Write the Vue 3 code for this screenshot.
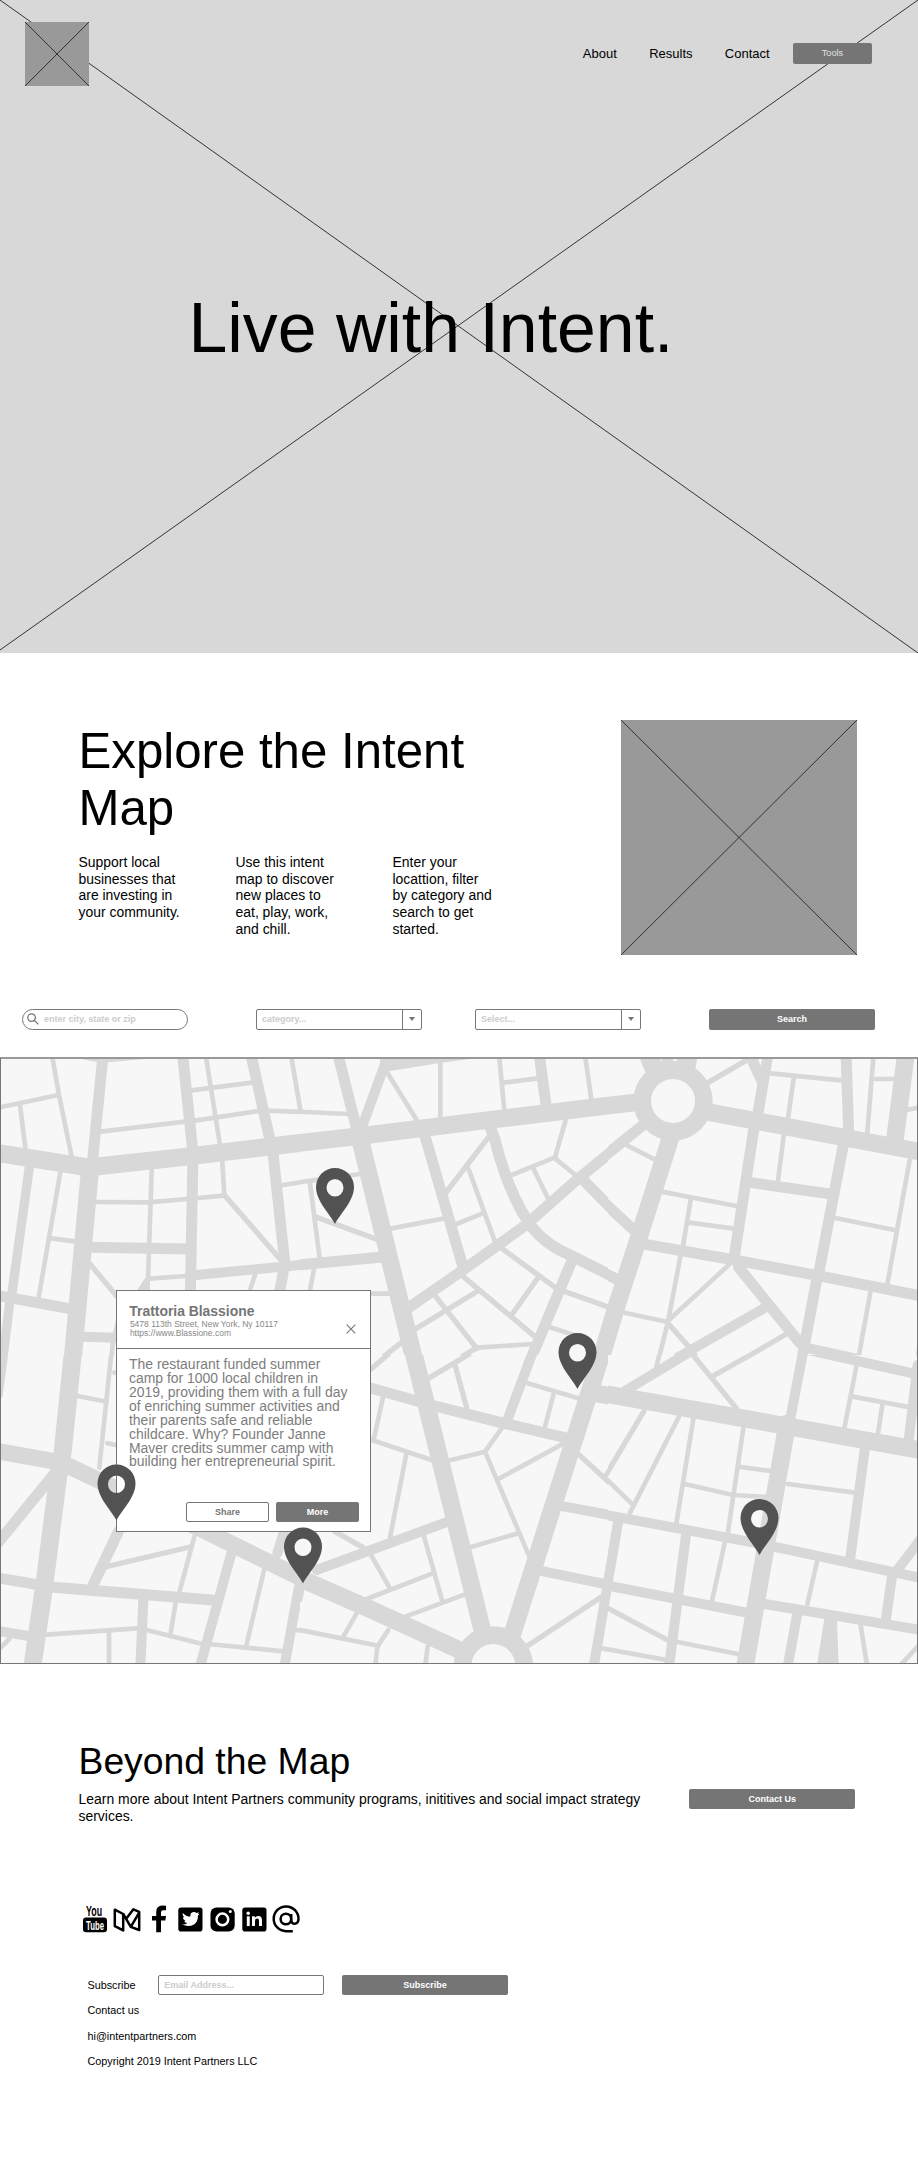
<script setup>
const nav = ['About', 'Results', 'Contact']

const steps = [
  ['Support local', 'businesses that', 'are investing in', 'your community.'],
  ['Use this intent', 'map to discover', 'new places to', 'eat, play, work,', 'and chill.'],
  ['Enter your', 'locattion, filter', 'by category and', 'search to get', 'started.'],
]

const story = [
  'The restaurant funded summer',
  'camp for 1000 local children in',
  '2019, providing them with a full day',
  'of enriching summer activities and',
  'their parents safe and reliable',
  'childcare. Why? Founder Janne',
  'Maver credits summer camp with',
  'building her entrepreneurial spirit.',
]

const pins = [
  { x: 335, y: 167 },
  { x: 577.5, y: 332 },
  { x: 116.5, y: 463.5 },
  { x: 303, y: 526.5 },
  { x: 759.5, y: 498 },
]

// Street map, split in sheets drawn at three units per pixel.
// roads: stroke width -> list of centre lines; areas: filled junctions.
const sheets = [
  {
    x: 0, y: -7, w: 300, h: 305,
    roads: {
      54: ['0,310 265,352 560,320 930,275', '270,358 218,930'],
      33: ['309,15 277,340', '548,15 579,310 571,730', '753,15 810,270', '819,310 855,645', '-5,737 205,775', '270,592 560,597', '850,665 838,730'],
      30: ['588,675 930,642', '250,860 345,863'],
      28: ['88,352 35,735', '30,750 8,930'],
      16: ['268,640 350,738', '675,437 838,625'],
      14: ['156,15 177,135 215,320', '0,172 172,136', '60,165 76,292', '302,245 555,215', '617,15 660,285', '575,121 755,98', '585,212 775,183', '873,15 901,180', '803,182 930,187', '848,405 930,393', '181,367 116,742', '155,565 222,574', '290,456 445,457 560,447 673,437', '455,362 444,690', '450,686 557,678', '667,335 673,437', '765,675 750,720', '935,660 920,725', '338,880 334,930', '345,852 354,815'],
    },
    areas: ['235,20 240,26 290,36 325,37 470,24 470,20', '436,683 450,690 450,722 410,722'],
  },
  {
    x: 300, y: -7, w: 308, h: 305,
    roads: {
      53: ['-5,279 180,258 560,211 940,165', '182,275 343,930', '975,685 949,770 902,930'],
      33: ['113,10 172,245', '717,10 738,165', '-5,645 240,622', '376,262 490,655', '330,770 485,663 675,527 830,390 940,300', '854,394 940,482', '814,636 691,930'],
      30: ['265,15 190,220'],
      16: ['50,502 230,568', '565,262 440,425', '605,595 765,712', '490,680 705,860', '715,682 635,795', '787,722 930,773', '405,737 530,895', '345,838 530,725', '530,893 460,935', '240,928 305,877'],
      14: ['-5,185 145,192', '-27,15 1,180', '262,68 350,210', '421,35 421,200', '597,15 613,180', '610,98 712,85', '855,15 874,148', '-5,397 180,372', '30,400 59,625', '42,658 30,720', '215,731 270,731', '275,535 433,505', '505,355 585,575', '470,522 548,490', '797,210 765,322 635,375', '700,355 745,447', '765,325 830,378', '745,830 830,857', '530,893 700,882'],
    },
    areas: ['240,20 525,20 525,25 415,40 270,63 240,60'],
    curve: 'M572,235 L585,270 Q622,420 685,517 Q730,582 810,615 L935,678',
  },
  {
    x: 608, y: -7, w: 310, h: 305,
    roads: {
      53: ['-10,168 90,157', '290,184 940,306', '894,10 860,275', '187,265 95,555 25,770 -24,935'],
      33: ['-5,314 102,228', '480,10 450,190', '437,240 378,625', '714,10 722,245', '430,398 660,431', '705,290 633,665 625,695 580,935', '112,583 380,630 630,677 940,738', '392,652 575,878', '-20,450 75,538', '-15,667 25,687'],
      30: ['468,775 210,922', '590,892 935,968'],
      16: ['300,98 420,28', '180,820 242,890 275,935', '535,852 385,940'],
      14: ['488,70 700,91', '557,85 540,205', '797,10 778,248', '802,87 860,87', '900,179 935,172', '527,258 510,392', '905,330 838,703', '682,504 860,540', '160,425 385,468', '248,450 225,588', '245,518 378,536', '218,615 180,815 150,935', '362,645 185,808', '50,788 175,815', '787,728 753,915', '55,285 140,328', '938,860 928,935'],
    },
    areas: ['95,25 90,15 270,15 261,60 112,66', '412,20 418,38 448,103 460,60 470,15'],
    blocks: ['154,20 160,20 163,39', '195,15 196,33 206,33 211,15', '446,18 464,18 458,47'],
    ring: { x: 195, y: 153 },
  },
  {
    x: 0, y: 298, w: 300, h: 309,
    roads: {
      54: ['219,-10 188,290 175,360 133,690 97,935'],
      50: ['-5,289 185,323 620,530 905,670'],
      33: ['160,360 -5,562', '355,530 280,688', '-5,669 160,697 636,735'],
      30: ['694,595 600,935', '897,695 853,935', '430,735 421,935', '-5,828 85,843', '852,530 832,595'],
      26: ['12,-5 -5,120'],
      16: ['310,637 570,576'],
      14: ['232,123 320,140', '334,-5 298,338', '322,265 352,271', '343,53 352,53', '583,545 538,712', '792,645 740,868', '625,867 850,889', '890,825 930,833', '140,839 410,820', '440,825 610,868', '527,743 512,833', '327,832 327,930', '0,880 28,852'],
    },
  },
  {
    x: 300, y: 298, w: 308, h: 309,
    roads: {
      53: ['341,-5 548,830', '-5,668 200,758 490,890', '636,840 907,-10', '885,115 940,124'],
      33: ['200,96 340,135 405,153 600,202 800,249'],
      30: ['698,-8 624,190', '50,645 438,502', '790,454 935,481', '730,649 905,685', '938,600 881,935'],
      16: ['213,42 265,-2', '385,70 510,-4', '465,30 500,158', '838,300 930,385', '105,530 190,578', '683,872 905,725'],
      14: ['683,85 835,130', '760,120 735,215', '250,122 222,250', '215,255 395,315', '320,292 270,548', '450,316 555,290 605,220', '555,290 688,605', '595,372 790,266', '513,576 650,536', '915,365 935,335', '213,600 267,695', '372,545 426,735', '200,732 398,655', '310,787 495,718', '-5,824 235,872', '170,775 130,845', '265,825 232,875 226,930', '383,875 376,930', '905,880 935,886', '8,695 0,735'],
    },
    ring: { x: 580, y: 933 },
  },
  {
    x: 608, y: 298, w: 310, h: 309,
    roads: {
      53: ['-35,112 400,189 940,286', '538,205 411,935'],
      30: ['240,-6 52,107', '585,-8 547,190', '600,-15 915,55', '929,30 902,255', '-5,480 450,565 940,669', '31,497 -2,690 -43,930', '-5,691 412,772', '470,747 940,825', '234,540 183,935', '770,285 727,608', '864,650 938,553', '852,665 834,790', '567,780 539,935'],
      16: ['255,0 385,160', '315,63 435,-5', '108,168 -5,358', '-5,757 178,855'],
      14: ['155,-5 145,36', '745,35 710,215', '735,125 895,155', '823,150 810,235', '-5,372 70,445', '213,185 65,475', '256,192 205,505', '406,220 360,530', '230,387 375,420 480,426', '398,336 490,348', '350,565 312,738', '-5,882 170,914', '205,860 390,897', '540,387 735,412', '627,620 598,748', '758,812 777,930', '875,933 935,868'],
    },
    areas: ['650,785 687,795 692,935 626,935'],
  },
]
</script>

<template>
  <main class="page">
    <section class="hero">
      <svg class="cross" viewBox="0 0 918 653" preserveAspectRatio="none">
        <path d="M0,0 L918,653 M918,0 L0,650" />
      </svg>
      <header class="bar">
        <svg class="logo" viewBox="0 0 64 64"><path d="M0,0 L64,64 M64,0 L0,64" /></svg>
        <nav class="links">
          <a v-for="n in nav" :key="n">{{ n }}</a>
        </nav>
        <button class="tools">Tools</button>
      </header>
      <h1>Live with Intent.</h1>
    </section>

    <section class="explore">
      <div class="intro">
        <h2>Explore the Intent<br />Map</h2>
        <div class="steps">
          <p v-for="(s, i) in steps" :key="i">
            <span v-for="l in s" :key="l" class="line">{{ l }}</span>
          </p>
        </div>
      </div>
      <svg class="picture" viewBox="0 0 236 235"><path d="M0,0 L236,235 M236,0 L0,235" /></svg>
    </section>

    <section class="filters">
      <div class="field round">
        <svg class="lens" viewBox="0 0 12 12"><circle cx="4.6" cy="4.6" r="3.8" /><path d="M7.4,7.4 L11.4,11.4" /></svg>
        <span>enter city, state or zip</span>
      </div>
      <div class="field select">
        <span>category...</span>
        <i><svg viewBox="0 0 6 4"><path d="M0,0 H6 L3,4 Z" /></svg></i>
      </div>
      <div class="field select">
        <span>Select...</span>
        <i><svg viewBox="0 0 6 4"><path d="M0,0 H6 L3,4 Z" /></svg></i>
      </div>
      <button class="btn">Search</button>
    </section>

    <section class="map">
      <svg class="streets" viewBox="0 0 918 607">
        <svg
          v-for="(s, i) in sheets" :key="i"
          :x="s.x" :y="s.y" :width="s.w" :height="s.h"
          :viewBox="`0 0 ${s.w * 3} ${s.h * 3}`"
        >
          <rect class="ground" :width="s.w * 3" :height="s.h * 3" />
          <g v-for="(lines, w) in s.roads" :key="w" class="road" :stroke-width="w">
            <polyline v-for="p in lines" :key="p" :points="p" />
          </g>
          <path v-if="s.curve" class="road" :d="s.curve" stroke-width="34" />
          <polygon v-for="a in s.areas || []" :key="a" class="area" :points="a" />
          <polygon v-for="b in s.blocks || []" :key="b" class="ground" :points="b" />
          <template v-if="s.ring">
            <circle class="area" :cx="s.ring.x" :cy="s.ring.y" r="119" />
            <circle class="ground" :cx="s.ring.x" :cy="s.ring.y" r="66" />
          </template>
        </svg>
      </svg>

      <article class="card">
        <header>
          <div>
            <h4>Trattoria Blassione</h4>
            <p>5478 113th Street, New York, Ny 10117</p>
            <p>https://www.Blassione.com</p>
          </div>
          <svg class="close" viewBox="0 0 10 10"><path d="M.7,.7 L9.3,9.3 M9.3,.7 L.7,9.3" /></svg>
        </header>
        <div class="story">
          <span v-for="l in story" :key="l" class="line">{{ l }}</span>
        </div>
        <footer>
          <button class="btn ghost">Share</button>
          <button class="btn">More</button>
        </footer>
      </article>

      <svg class="pins" viewBox="0 0 918 607">
        <path
          v-for="p in pins" :key="p.x" :transform="`translate(${p.x} ${p.y})`"
          d="M0,0 C-5,-10 -19,-23 -19,-37 A19,19 0 0 1 19,-37 C19,-23 5,-10 0,0 Z M8.5,-36.3 A8.5,8.8 0 1 0 -8.5,-36.3 A8.5,8.8 0 1 0 8.5,-36.3 Z"
        />
      </svg>
      <div class="frame"></div>
    </section>

    <section class="beyond">
      <div>
        <h3>Beyond the Map</h3>
        <p>Learn more about Intent Partners community programs, inititives and social impact strategy<br />services.</p>
      </div>
      <button class="btn">Contact Us</button>
    </section>

    <section class="social">
      <svg viewBox="0 0 220 28">
        <g class="brand">
          <text x="3.1" y="11" font-size="15" textLength="16" lengthAdjust="spacingAndGlyphs">You</text>
          <rect x="0" y="12.6" width="24" height="14.6" rx="3" />
          <text class="inv" x="3" y="24.9" font-size="13" textLength="18" lengthAdjust="spacingAndGlyphs">Tube</text>
        </g>
        <g class="outline">
          <path d="M31.8,4.7 L40.2,9 V25.4 L31.8,21.1 Z" />
          <path d="M40.2,9 L47.8,21.8 L56.2,25 V6.8 L50.4,4.3 L43,14" />
          <path d="M47.8,21.8 L56.2,7.6" />
        </g>
        <path d="M83,.8 V5.3 H80 Q78,5.3 78,7.6 V10.9 H83 L82.4,15.6 H78 V27.2 H73.2 V15.6 H69 V10.9 H73.2 V7 Q73.2,.8 79.3,.6 Z" />
        <rect x="95.3" y="2.4" width="24.2" height="24.2" rx="2.8" />
        <path class="inv" d="M99.8,7.9 Q103,11.4 107.4,11.6 Q106.8,7.5 110.6,7 Q112.3,6.9 113.5,8.1 L115.9,7.2 L114.8,9.2 L116.5,8.8 L114.9,10.7 Q115.3,16.3 111,19.4 Q105.7,22.4 99.2,19.6 Q102.5,19.8 104.3,18.1 Q101.9,17.8 101.2,15.9 H102.5 Q99.8,14.8 99.8,12.2 L101.2,12.5 Q98.8,10.4 99.8,7.9 Z" />
        <rect x="127.5" y="2.4" width="24.2" height="24.2" rx="6" />
        <circle class="lensring" cx="139.4" cy="14.4" r="5.8" />
        <circle class="inv" cx="147.3" cy="6.6" r="1.5" />
        <rect x="159.3" y="2.4" width="24.2" height="24.2" rx="2.8" />
        <g class="inv">
          <circle cx="165.2" cy="8.2" r="1.7" />
          <rect x="163.8" y="11.3" width="2.9" height="9.8" />
          <path d="M169,11.3 H171.8 V12.7 Q173,11 175.2,11 Q179,11 179,15.3 V21.1 H176 V16 Q176,13.6 174.2,13.6 Q172,13.6 172,16 V21.1 H169 Z" />
        </g>
        <g class="at">
          <circle cx="202.9" cy="14" r="5.3" />
          <path d="M208.2,9 V14.8 Q208.5,18.8 211.8,18.8 Q215.5,18 215.5,14 A12.4,12.4 0 1 0 203,26.2 H209.8" />
        </g>
      </svg>
    </section>

    <footer class="foot">
      <div class="signup">
        <label>Subscribe</label>
        <div class="field"><span>Email Address...</span></div>
        <button class="btn">Subscribe</button>
      </div>
      <p>Contact us</p>
      <p>hi@intentpartners.com</p>
      <p>Copyright 2019 Intent Partners LLC</p>
    </footer>
  </main>
</template>

<style>
body { background: #fff; }
</style>

<style scoped>
.page {
  width: 918px;
  height: 2160px;
  overflow: hidden;
  background: #fff;
  color: #000;
  font-family: "Liberation Sans", Arial, Helvetica, sans-serif;
}
.page * { box-sizing: border-box; }
h1, h2, h3, h4, p { margin: 0; font-weight: 400; }
svg { display: block; }
.line { display: block; white-space: nowrap; }

.hero { position: relative; height: 653px; background: #d8d8d8; }
.cross { position: absolute; inset: 0; width: 918px; height: 653px; }
.cross path, .logo path, .picture path { stroke: #333; stroke-width: 1; fill: none; }
.bar { position: relative; display: flex; align-items: center; height: 108px; padding: 0 46px 0 25px; }
.logo { width: 64px; height: 64px; background: #999; }
.links { display: flex; gap: 32.3px; margin: 0 23.4px 1px auto; font-size: 13px; }
.tools {
  width: 79px; height: 21px; margin-bottom: 1px; padding: 0; border: 0; border-radius: 2px;
  background: #757575; color: #e0e0e0; font: 9.2px/1 "Liberation Sans", sans-serif;
}
h1 { position: relative; padding: 180px 0 0 188.5px; font-size: 69.8px; line-height: 80px; white-space: nowrap; }

.explore { display: flex; justify-content: space-between; height: 356px; padding: 67px 61px 0 78.5px; }
h2 { padding-top: 1.5px; font-size: 49.2px; line-height: 57px; white-space: nowrap; }
.steps { display: grid; grid-template-columns: repeat(3, 157px); padding-top: 18.8px; font-size: 13.95px; line-height: 16.6px; }
.picture { width: 236px; height: 235px; background: #999; }

.filters { display: flex; height: 48px; padding-left: 22px; }
.field {
  display: flex; align-items: center; width: 166px; height: 20.5px; border: 1.5px solid #777;
  border-radius: 2px; background: #fff; color: #ccc; font-weight: 700; font-size: 9px; line-height: 12px;
}
.field span { padding-left: 5px; }
.round { margin-right: 68px; border-radius: 11px; }
.lens { width: 12px; height: 12px; margin-left: 4px; fill: none; stroke: #757575; stroke-width: 1.3; }
.select span { flex: 1; }
.select + .select { margin: 0 68px 0 53px; }
.select i { display: grid; place-items: center; width: 19px; height: 100%; border-left: 1.3px solid #777; }
.select i svg { width: 6px; height: 4px; fill: #757575; }
.btn {
  width: 166px; height: 20.5px; padding: 0; border: 0; border-radius: 2px; background: #757575;
  color: #fff; font: 700 9px/1 "Liberation Sans", sans-serif;
}

.map { position: relative; height: 607px; }
.streets, .pins, .frame { position: absolute; left: 0; top: 0; width: 918px; height: 607px; }
.frame { border: 1px solid #777; border-top: 2px solid #999; }
.ground { fill: #f7f7f7; }
.area { fill: #d8d8d8; }
.road { fill: none; stroke: #d8d8d8; stroke-linecap: round; }
.pins { fill: #525252; fill-rule: evenodd; }
.card {
  position: absolute; left: 116px; top: 232.5px; width: 255px; height: 242px;
  border: 1.3px solid #757575; background: #fff; color: #757575;
}
.card header {
  display: flex; justify-content: space-between; height: 58.5px; padding: 11px 14px 0 12.3px;
  border-bottom: 1.3px solid #757575;
}
.card h4 { font-weight: 700; font-size: 13.9px; line-height: 18px; }
.card header p { padding-left: .6px; font-size: 8.5px; line-height: 9.3px; color: #888; white-space: nowrap; }
.close { width: 10px; height: 10px; margin-top: 22.5px; fill: none; stroke: #757575; stroke-width: 1.1; }
.story { height: 153px; padding: 9.3px 0 0 12px; font-size: 13.95px; line-height: 13.87px; color: #7d7d7d; }
.card footer { display: flex; gap: 7px; padding-left: 69px; }
.card .btn { width: 83px; height: 20px; }
.card .ghost { border: 1.4px solid #757575; background: #fff; color: #757575; }

.beyond { display: flex; justify-content: space-between; height: 241px; padding: 74.8px 62.7px 0 78.5px; }
h3 { font-size: 37.3px; line-height: 44px; }
.beyond p { padding-top: 8.6px; font-size: 13.95px; line-height: 16.6px; white-space: nowrap; }
.beyond .btn { margin-top: 50.2px; }

.social { height: 69.7px; padding-left: 82.7px; }
.social svg { width: 220px; height: 28px; }
.brand { font-family: "Liberation Sans", sans-serif; font-weight: 700; }
.inv { fill: #fff; }
.outline { fill: none; stroke: #000; stroke-width: 2.5; stroke-linejoin: round; }
.lensring { fill: none; stroke: #fff; stroke-width: 2.5; }
.at { fill: none; stroke: #000; stroke-width: 2.5; }

.foot { padding-left: 87.5px; font-size: 10.8px; }
.signup { display: flex; height: 22.5px; }
.signup label { width: 70.8px; line-height: 20.5px; }
.signup .btn { margin-left: 17.7px; padding-top: 1px; }
.foot p { height: 25.6px; line-height: 27px; }
</style>
